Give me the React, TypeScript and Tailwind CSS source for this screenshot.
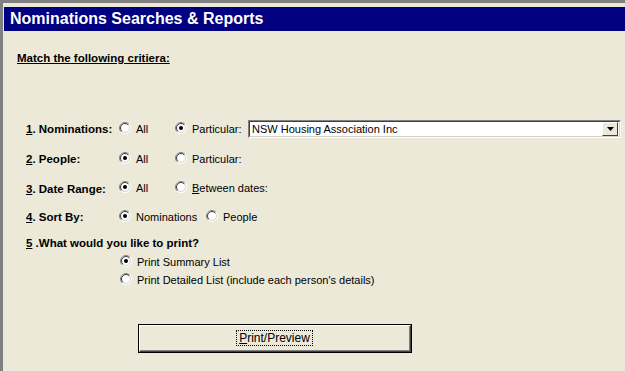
import React from "react";

function Radio({ checked = false }: { checked?: boolean }) {
  return (
    <svg width="12" height="12" viewBox="0 0 12 12" className="shrink-0 -mt-[2px]">
      <circle cx="6" cy="6" r="5.5" fill="#ffffff" stroke="#ffffff" />
      <path d="M2.1 9.9 A5.5 5.5 0 0 1 9.9 2.1" fill="none" stroke="#808080" />
      <circle cx="6" cy="6" r="4.5" fill="#ffffff" stroke="#d4d0c8" />
      <path d="M2.8 9.2 A4.5 4.5 0 0 1 9.2 2.8" fill="none" stroke="#404040" />
      {checked && <circle cx="6" cy="6" r="2" fill="#000000" />}
    </svg>
  );
}

function Option({ checked, label, width }: { checked?: boolean; label: React.ReactNode; width?: string }) {
  return (
    <div className={`flex items-center gap-[5px] ${width ?? ""}`}>
      <Radio checked={checked} />
      <span className="whitespace-nowrap">{label}</span>
    </div>
  );
}

function Label({ num, text, className }: { num: string; text: string; className?: string }) {
  return (
    <div className={`w-[93px] font-bold text-[11.5px] whitespace-nowrap ${className ?? ""}`}>
      <span className="underline">{num}</span>
      {text}
    </div>
  );
}

function Combo() {
  return (
    <div className="w-[373px] h-[18px] border-t border-l border-[#808080] border-b border-r border-b-white border-r-white">
      <div className="h-full flex items-center bg-white border-t border-l border-[#404040] border-b border-r border-b-[#d4d0c8] border-r-[#d4d0c8]">
        <span className="flex-1 pl-[2px] leading-[13px]">NSW Housing Association Inc</span>
        <div className="w-[16px] h-[14px] bg-[#ece9d8] border-t border-l border-white border-b border-r border-b-[#404040] border-r-[#404040] flex items-center justify-center mr-[1px]">
          <svg width="7" height="4" viewBox="0 0 7 4">
            <path d="M0 0 H7 L3.5 4 Z" fill="#000" />
          </svg>
        </div>
      </div>
    </div>
  );
}

export default function App() {
  return (
    <div className="w-[625px] h-[371px] bg-[#ece9d8] border-t-[3px] border-l-[3px] border-[#808080] overflow-hidden text-black text-[11px] leading-[13px] font-['Liberation_Sans',Arial,sans-serif]">
      <div className="mt-[4px] ml-[1px] h-[24px] bg-[#000080] text-white font-bold text-[16px] leading-[24px] pl-[6px]">
        Nominations Searches &amp; Reports
      </div>

      <div className="mt-[21px] pl-[14px] font-bold underline text-[11.5px]">Match the following critiera:</div>

      <div className="pl-[23px]">
        <div className="mt-[54px] h-[20px] flex items-center">
          <Label num="1" text=". Nominations:" />
          <Option label="All" width="w-[56px]" />
          <Option checked label="Particular:" width="w-[73px]" />
          <Combo />
        </div>

        <div className="mt-[10px] h-[20px] flex items-center">
          <Label num="2" text=". People:" />
          <Option checked label="All" width="w-[56px]" />
          <Option label="Particular:" />
        </div>

        <div className="mt-[9px] h-[20px] flex items-center">
          <Label num="3" text=". Date Range:" className="mt-[3px]" />
          <Option checked label="All" width="w-[56px]" />
          <Option
            label={
              <>
                <span className="underline">B</span>etween dates:
              </>
            }
          />
        </div>

        <div className="mt-[9px] h-[20px] flex items-center">
          <Label num="4" text=". Sort By:" className="mt-[1px]" />
          <Option checked label="Nominations" width="w-[87px]" />
          <Option label="People" />
        </div>

        <div className="mt-[10px] font-bold text-[11.5px]">
          <span className="underline">5</span> .What would you like to print?
        </div>

        <div className="pl-[94px]">
          <div className="mt-[4px] h-[16px] flex items-center">
            <Option checked label="Print Summary List" />
          </div>
          <div className="mt-[2px] h-[16px] flex items-center">
            <Option label="Print Detailed List (include each person's details)" />
          </div>
        </div>
      </div>

      <div className="mt-[36px] ml-[135px] w-[274px] h-[29px] border border-black">
        <div className="h-full border-t border-l border-white border-b border-r border-b-[#404040] border-r-[#404040]">
          <div className="h-full flex items-center justify-center border-b border-r border-[#808080]">
            <span className="text-[12px] leading-[14px] px-[2px] border border-dotted border-black">
              <span className="underline">P</span>rint/Preview
            </span>
          </div>
        </div>
      </div>
    </div>
  );
}
